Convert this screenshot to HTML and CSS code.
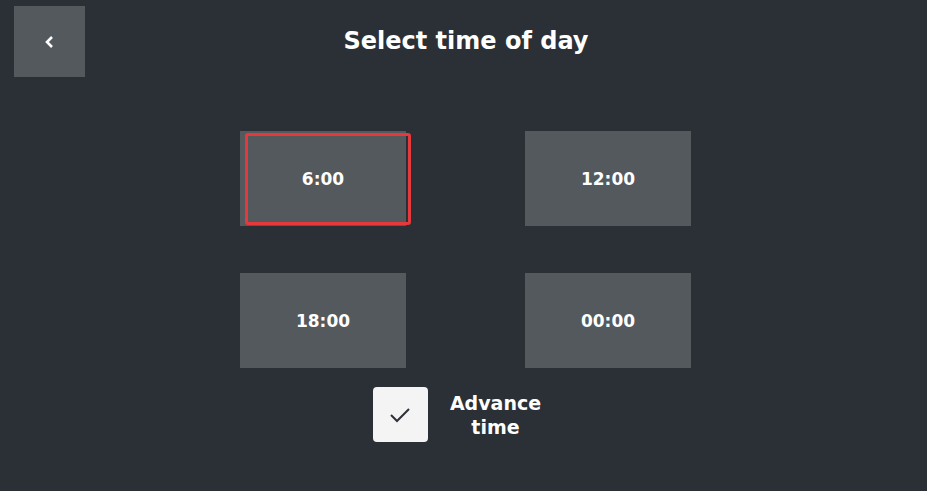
FILE: index.html
```html
<!DOCTYPE html>
<html>
<head>
  <title>Select time of day</title>
  <link rel="stylesheet" href="styles.css">
</head>
<body>
  <div class="screen">
    <div class="header">
      <button class="back">
        <svg width="14" height="14" viewBox="0 0 14 14"><path d="M9 2 L4 7 L9 12" fill="none" stroke="#fff" stroke-width="2.6" stroke-linejoin="miter"/></svg>
      </button>
      <h1 class="title">Select time of day</h1>
    </div>

    <div class="times">
      <button class="time selected">6:00</button>
      <button class="time">12:00</button>
      <button class="time">18:00</button>
      <button class="time">00:00</button>
    </div>

    <div class="advance">
      <div class="check">
        <svg width="24" height="24" viewBox="0 0 24 24"><path d="M3 12 L9 18 L21 6" fill="none" stroke="#2e3238" stroke-width="2"/></svg>
      </div>
      <div class="advance-label">Advance<br>time</div>
    </div>
  </div>
</body>
</html>
```

FILE: styles.css
```css
body {
  margin: 0;
  background-color: #2b2f36;
  font-family: "DejaVu Sans", sans-serif;
  color: #fff;
}

.screen {
  width: 927px;
  height: 491px;
  display: flex;
  flex-direction: column;
  align-items: center;
}

.header {
  width: 100%;
  height: 131px;
  display: flex;
  align-items: flex-start;
}

.back {
  width: 71px;
  height: 71px;
  margin: 6px 0 0 14px;
  border: none;
  background-color: #54595d;
  display: flex;
  align-items: center;
  justify-content: center;
  padding: 0;
}

.title {
  flex: 1;
  margin: 24px 0 0 0;
  padding-right: 80px;
  text-align: center;
  font-size: 24px;
  font-weight: 700;
  line-height: 34px;
}

.times {
  display: grid;
  grid-template-columns: 166px 166px;
  grid-auto-rows: 95px;
  column-gap: 119px;
  row-gap: 47px;
  margin-left: 4px;
}

.time {
  position: relative;
  border: none;
  background-color: #54595d;
  color: #fff;
  font-family: "DejaVu Sans", sans-serif;
  font-size: 17px;
  font-weight: 700;
  padding: 0;
}

.selected::after {
  content: "";
  position: absolute;
  left: 5px;
  top: 2px;
  width: 160px;
  height: 86px;
  border: 3px solid #e5393b;
  border-radius: 3px;
}

.advance {
  display: flex;
  align-items: center;
  margin-top: 19px;
  gap: 22px;
  margin-left: -13px;
}

.check {
  width: 55px;
  height: 55px;
  background-color: #f4f4f4;
  border-radius: 4px;
  display: flex;
  align-items: center;
  justify-content: center;
}

.advance-label {
  text-align: center;
  font-size: 19px;
  font-weight: 700;
  line-height: 24px;
}
```
